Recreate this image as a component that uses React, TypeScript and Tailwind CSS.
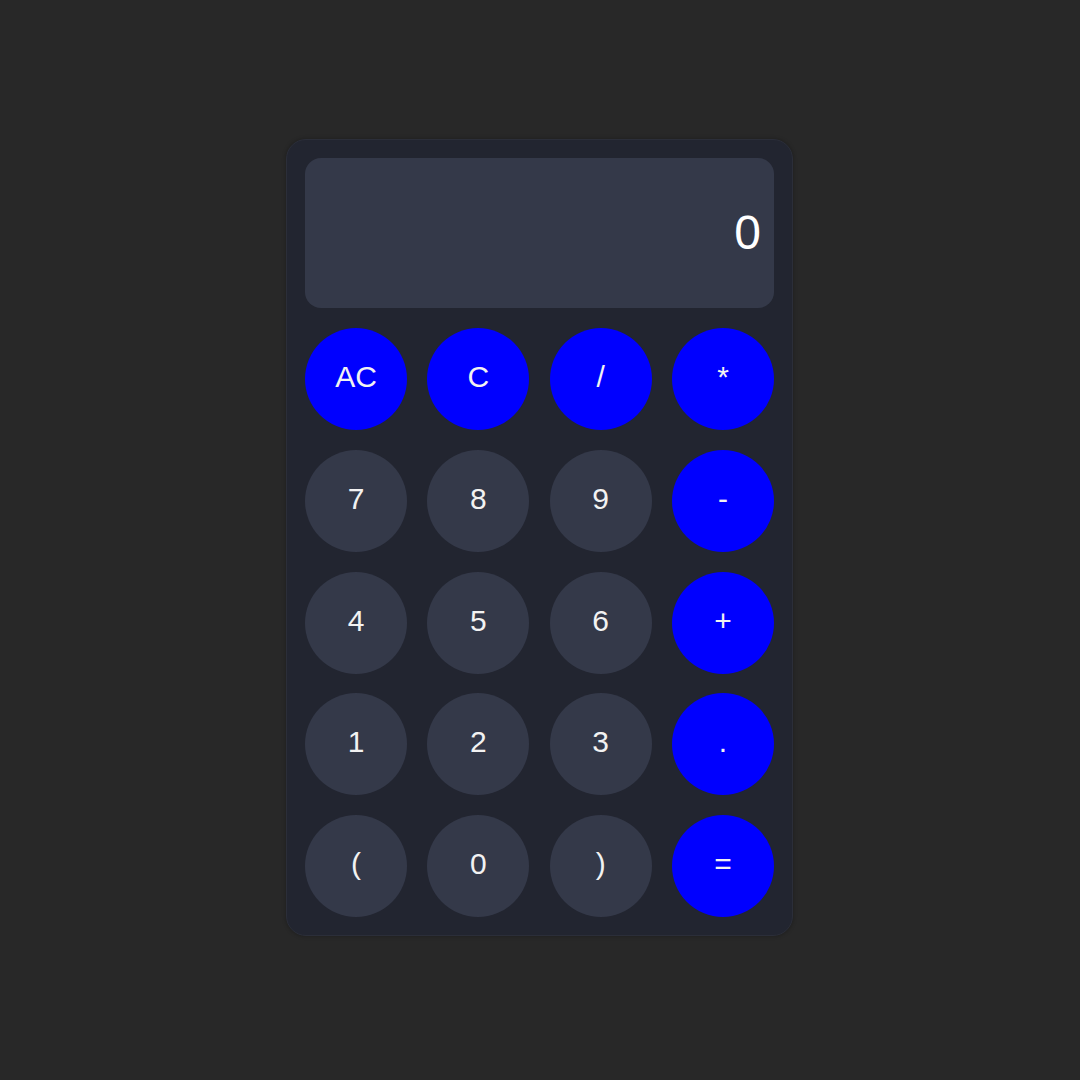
import React, { useState } from 'react';

type Key = { label: string; op?: boolean };

const keys: Key[] = [
  { label: 'AC', op: true },
  { label: 'C', op: true },
  { label: '/', op: true },
  { label: '*', op: true },
  { label: '7' },
  { label: '8' },
  { label: '9' },
  { label: '-', op: true },
  { label: '4' },
  { label: '5' },
  { label: '6' },
  { label: '+', op: true },
  { label: '1' },
  { label: '2' },
  { label: '3' },
  { label: '.', op: true },
  { label: '(' },
  { label: '0' },
  { label: ')' },
  { label: '=', op: true },
];

const App: React.FC = () => {
  const [value, setValue] = useState('0');

  const press = (k: string) => {
    if (k === 'AC') return setValue('0');
    if (k === 'C') return setValue(v => (v.length > 1 ? v.slice(0, -1) : '0'));
    if (k === '=') {
      try {
        // eslint-disable-next-line no-new-func
        const r = Function(`"use strict"; return (${value})`)();
        setValue(String(r));
      } catch {
        setValue('Error');
      }
      return;
    }
    setValue(v => (v === '0' || v === 'Error' ? k : v + k));
  };

  return (
    <div className="min-h-screen bg-[#282828] flex justify-center pt-[139px] font-['Liberation_Sans',Arial,sans-serif]">
      <div className="w-[507px] h-[797px] mr-[1px] bg-[#222530] border border-[#2b2e39] rounded-[20px] p-[18px] shadow-[0_0_4px_rgba(0,0,0,0.3)]">
        {/* display */}
        <div className="h-[150px] w-full bg-[#343949] rounded-[16px] flex items-center justify-end pr-[13px] mb-5">
          <span className="text-[48px] text-white leading-none">{value}</span>
        </div>

        {/* keypad */}
        <div className="grid grid-cols-[repeat(4,102px)] justify-between gap-y-[19.75px]">
          {keys.map(k => (
            <button
              key={k.label}
              onClick={() => press(k.label)}
              className={`w-[102px] h-[102px] rounded-full flex items-center justify-center text-[30px] leading-none text-[#f2f2f2] pb-1 ${
                k.op ? 'bg-[#0000ff]' : 'bg-[#343949]'
              }`}
            >
              {k.label}
            </button>
          ))}
        </div>
      </div>
    </div>
  );
};

export default App;
